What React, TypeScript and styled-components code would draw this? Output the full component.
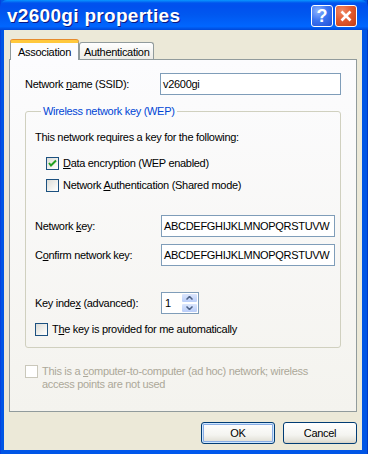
import React from "react";
import styled, { createGlobalStyle } from "styled-components";

const GlobalStyle = createGlobalStyle`
  html, body {
    margin: 0;
    padding: 0;
    background: #0055e5;
  }
  body {
    font-family: Tahoma, "Liberation Sans", Arial, sans-serif;
    font-size: 11px;
    letter-spacing: -0.3px;
    color: #000;
  }
`;

// WINDOW FRAME
const Window = styled.div`
  width: 368px;
  height: 454px;
  box-sizing: border-box;
  display: flex;
  flex-direction: column;
  background: linear-gradient(to right, #0831d9 0, #0055e5 1px, #0058ee 50%, #0055e5 calc(100% - 1px), #001ea0 100%);
`;

const TitleBar = styled.div`
  height: 30px;
  flex: none;
  display: flex;
  align-items: center;
  padding: 0 11px 0 7px;
  background: linear-gradient(
    to bottom,
    #0997ff 0,
    #0053ee 3px,
    #0050ee 6px,
    #0058f0 50%,
    #0066ff 88%,
    #0048d8 100%
  );
  border-radius: 7px 7px 0 0;
`;

const Title = styled.div`
  flex: 1;
  font-family: "Trebuchet MS", "Liberation Sans", Arial, sans-serif;
  font-weight: bold;
  font-size: 19px;
  letter-spacing: 0.3px;
  color: #fff;
  text-shadow: 1px 1px 0 #0a1883;
  padding-top: 1px;
`;

const CaptionButton = styled.div<{ $kind: "help" | "close" }>`
  width: 22px;
  height: 22px;
  box-sizing: border-box;
  margin-left: 2px;
  margin-top: 2px;
  border: 1px solid #fff;
  border-radius: 3px;
  display: flex;
  align-items: center;
  justify-content: center;
  color: #fff;
  font-family: "Liberation Sans", Arial, sans-serif;
  font-weight: bold;
  font-size: 18px;
  letter-spacing: 0;
  background: ${(p) =>
    p.$kind === "close"
      ? "radial-gradient(circle at 30% 25%, #f08a66 0, #e35b30 45%, #c23d14 100%)"
      : "radial-gradient(circle at 30% 25%, #8fb4ff 0, #3d76f2 45%, #1f4ed6 100%)"};
`;

const Body = styled.div`
  flex: 1;
  margin: 0 6px 4px 4px;
  background: #ece9d8;
  display: flex;
  flex-direction: column;
  padding: 10px 5px 0 5px;
`;

// TABS
const TabStrip = styled.div`
  display: flex;
  align-items: flex-end;
  padding-left: 1px;
`;

const Tab = styled.div<{ $active?: boolean }>`
  box-sizing: border-box;
  height: ${(p) => (p.$active ? "20px" : "17px")};
  padding: ${(p) => (p.$active ? "1px 7px 0 7px" : "1px 4px 0 4px")};
  border: 1px solid #919b9c;
  border-bottom: none;
  border-radius: 3px 3px 0 0;
  display: flex;
  align-items: center;
  position: relative;
  z-index: ${(p) => (p.$active ? 1 : 0)};
  margin-bottom: ${(p) => (p.$active ? "-1px" : "0")};
  background: ${(p) =>
    p.$active ? "#fcfcfe" : "linear-gradient(to bottom, #ffffff, #ecebe6)"};
  border-top: ${(p) => (p.$active ? "3px solid #ffc83c" : "1px solid #919b9c")};
  box-shadow: ${(p) => (p.$active ? "0 -1px 0 #e68b2c" : "none")};
`;

const Panel = styled.div`
  height: 353px;
  box-sizing: border-box;
  border: 1px solid #919b9c;
  background: linear-gradient(to bottom, #fcfcfe, #f4f3ee);
  padding: 13px 15px 0 15px;
  display: flex;
  flex-direction: column;
`;

// ROWS
const Row = styled.div<{ $top?: number; $h?: number }>`
  display: flex;
  align-items: center;
  margin-top: ${(p) => p.$top ?? 0}px;
  height: ${(p) => p.$h ?? 22}px;
`;

const Label = styled.div<{ $w: number }>`
  width: ${(p) => p.$w}px;
  flex: none;
  white-space: nowrap;
`;

const TextBox = styled.div<{ $w: number }>`
  width: ${(p) => p.$w}px;
  height: 22px;
  box-sizing: border-box;
  border: 1px solid #7f9db9;
  background: #fff;
  display: flex;
  align-items: center;
  padding-left: 2px;
  white-space: nowrap;
  overflow: hidden;
`;

const Group = styled.fieldset`
  margin: 10px 0 0 0;
  padding: 13px 0 11px 9px;
  border: 1px solid #d0d0bf;
  border-radius: 3px;
  display: flex;
  flex-direction: column;
`;

const Legend = styled.legend`
  color: #0046d5;
  line-height: 13px;
  margin-left: 6px;
  padding: 0 2px;
`;

const Text = styled.div`
  line-height: 13px;
  white-space: nowrap;
`;

const CheckRow = styled.div<{ $top: number; $indent?: number; $disabled?: boolean }>`
  display: flex;
  align-items: flex-start;
  gap: 4px;
  margin-top: ${(p) => p.$top}px;
  margin-left: ${(p) => p.$indent ?? 0}px;
  line-height: 13px;
  color: ${(p) => (p.$disabled ? "#aca899" : "#000")};
  white-space: nowrap;
`;

const Box = styled.span<{ $disabled?: boolean }>`
  width: 13px;
  height: 13px;
  flex: none;
  box-sizing: border-box;
  border: 1px solid ${(p) => (p.$disabled ? "#cac8bb" : "#1c5180")};
  background: ${(p) =>
    p.$disabled ? "#fff" : "linear-gradient(135deg, #dcdcd7 0%, #f6f6f3 70%, #ffffff 100%)"};
  display: flex;
  align-items: center;
  justify-content: center;
`;

const Spin = styled.div`
  display: flex;
  width: 38px;
  height: 22px;
  box-sizing: border-box;
  border: 1px solid #7f9db9;
  background: #fff;
`;

const SpinValue = styled.div`
  flex: 1;
  padding-left: 3px;
  display: flex;
  align-items: center;
`;

const SpinButtons = styled.div`
  width: 17px;
  display: flex;
  flex-direction: column;
`;

const SpinButton = styled.div`
  flex: 1;
  box-sizing: border-box;
  border: 1px solid #fff;
  border-radius: 2px;
  background: linear-gradient(to bottom, #dbe6fd, #b9cdf9);
  display: flex;
  align-items: center;
  justify-content: center;
`;

// BUTTONS
const ButtonRow = styled.div`
  display: flex;
  justify-content: flex-end;
  gap: 8px;
  margin-top: 10px;
`;

const Button = styled.div<{ $default?: boolean }>`
  width: 74px;
  height: 22px;
  box-sizing: border-box;
  border: 1px solid #003c74;
  border-radius: 3px;
  display: flex;
  align-items: center;
  justify-content: center;
  background: linear-gradient(to bottom, #ffffff 0%, #f4f4f0 60%, #e3e1d8 90%, #d6d0c5 100%);
  box-shadow: ${(p) =>
    p.$default ? "inset 0 0 0 1px #cee7ff, inset 0 0 0 2px #89ade4" : "none"};
`;

const Check = () => (
  <svg width="9" height="9" viewBox="0 0 9 9">
    <polyline points="1,4 3,6.5 8,1.5" fill="none" stroke="#21a121" strokeWidth="2" />
  </svg>
);

const Arrow = ({ up }: { up?: boolean }) => (
  <svg width="7" height="4" viewBox="0 0 7 4">
    <polyline
      points={up ? "0.5,3.5 3.5,0.5 6.5,3.5" : "0.5,0.5 3.5,3.5 6.5,0.5"}
      fill="none"
      stroke="#4d6185"
      strokeWidth="1.5"
    />
  </svg>
);

const App = () => {
  return (
    <>
      <GlobalStyle />
      <Window>
        <TitleBar>
          <Title>v2600gi properties</Title>
          <CaptionButton $kind="help">?</CaptionButton>
          <CaptionButton $kind="close">
            <svg width="12" height="12" viewBox="0 0 12 12">
              <path d="M1.5 1.5 L10.5 10.5 M10.5 1.5 L1.5 10.5" stroke="#fff" strokeWidth="2.6" />
            </svg>
          </CaptionButton>
        </TitleBar>

        <Body>
          <TabStrip>
            <Tab $active>Association</Tab>
            <Tab>Authentication</Tab>
          </TabStrip>

          <Panel>
            <Row>
              <Label $w={135}>
                Network <u>n</u>ame (SSID):
              </Label>
              <TextBox $w={182}>v2600gi</TextBox>
            </Row>

            <Group>
              <Legend>Wireless network key (WEP)</Legend>
              <Text>This network requires a key for the following:</Text>
              <CheckRow $top={13} $indent={11}>
                <Box>
                  <Check />
                </Box>
                <span>
                  <u>D</u>ata encryption (WEP enabled)
                </span>
              </CheckRow>
              <CheckRow $top={9} $indent={11}>
                <Box />
                <span>
                  Network <u>A</u>uthentication (Shared mode)
                </span>
              </CheckRow>

              <Row $top={23}>
                <Label $w={126}>
                  Network <u>k</u>ey:
                </Label>
                <TextBox $w={174}>ABCDEFGHIJKLMNOPQRSTUVW</TextBox>
              </Row>
              <Row $top={7}>
                <Label $w={126}>
                  C<u>o</u>nfirm network key:
                </Label>
                <TextBox $w={174}>ABCDEFGHIJKLMNOPQRSTUVW</TextBox>
              </Row>

              <Row $top={26}>
                <Label $w={126}>
                  Key inde<u>x</u> (advanced):
                </Label>
                <Spin>
                  <SpinValue>1</SpinValue>
                  <SpinButtons>
                    <SpinButton>
                      <Arrow up />
                    </SpinButton>
                    <SpinButton>
                      <Arrow />
                    </SpinButton>
                  </SpinButtons>
                </Spin>
              </Row>
              <CheckRow $top={9}>
                <Box />
                <span>
                  T<u>h</u>e key is provided for me automatically
                </span>
              </CheckRow>
            </Group>

            <CheckRow $top={17} $disabled>
              <Box $disabled />
              <span>
                This is a <u>c</u>omputer-to-computer (ad hoc) network; wireless
                <br />
                access points are not used
              </span>
            </CheckRow>
          </Panel>

          <ButtonRow>
            <Button $default>OK</Button>
            <Button>Cancel</Button>
          </ButtonRow>
        </Body>
      </Window>
    </>
  );
};

export default App;
